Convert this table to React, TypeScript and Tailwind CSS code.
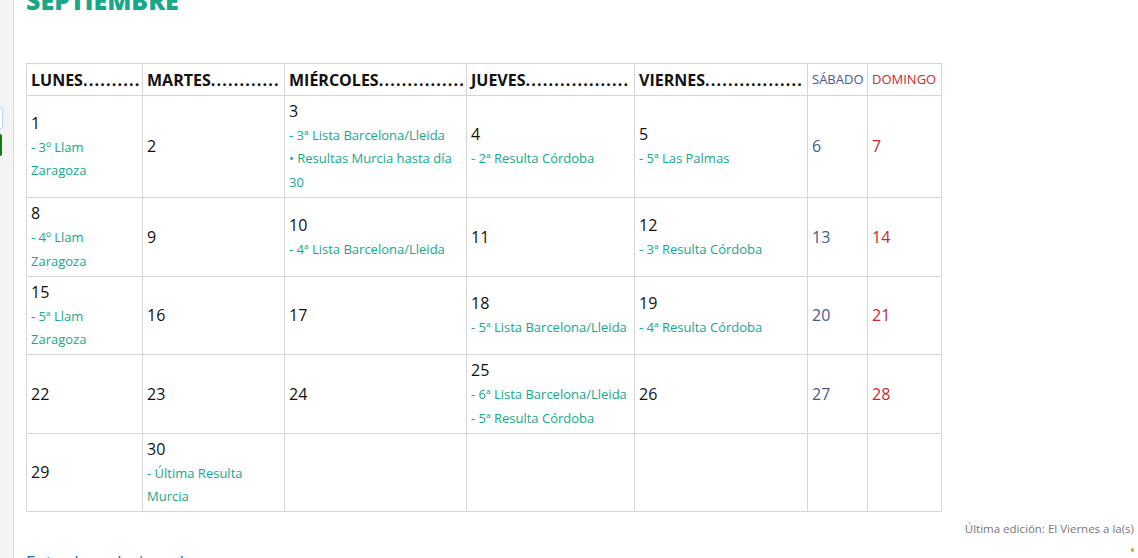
import React from "react";

type Day = { n?: number; ev?: React.ReactNode[] };

const teal = "text-[#17a78b]";

const weeks: Day[][] = [
  [
    { n: 1, ev: [<>- 3º Llam<br />Zaragoza</>] },
    { n: 2 },
    { n: 3, ev: ["- 3ª Lista Barcelona/Lleida", <>• Resultas Murcia hasta día<br />30</>] },
    { n: 4, ev: ["- 2ª Resulta Córdoba"] },
    { n: 5, ev: ["- 5ª Las Palmas"] },
    { n: 6 },
    { n: 7 },
  ],
  [
    { n: 8, ev: [<>- 4º Llam<br />Zaragoza</>] },
    { n: 9 },
    { n: 10, ev: ["- 4ª Lista Barcelona/Lleida"] },
    { n: 11 },
    { n: 12, ev: ["- 3ª Resulta Córdoba"] },
    { n: 13 },
    { n: 14 },
  ],
  [
    { n: 15, ev: [<>- 5ª Llam<br />Zaragoza</>] },
    { n: 16 },
    { n: 17 },
    { n: 18, ev: ["- 5ª Lista Barcelona/Lleida"] },
    { n: 19, ev: ["- 4ª Resulta Córdoba"] },
    { n: 20 },
    { n: 21 },
  ],
  [
    { n: 22 },
    { n: 23 },
    { n: 24 },
    { n: 25, ev: ["- 6ª Lista Barcelona/Lleida", "- 5ª Resulta Córdoba"] },
    { n: 26 },
    { n: 27 },
    { n: 28 },
  ],
  [{ n: 29 }, { n: 30, ev: [<>- Última Resulta<br />Murcia</>] }, {}, {}, {}, {}, {}],
];

const rowHeights = ["h-[102px]", "h-[79px]", "h-[78px]", "h-[79px]", "h-[78px]"];

// weekday headers, dots counted to fill each column like the original
const heads = [
  { label: "LUNES", dots: 10 },
  { label: "MARTES", dots: 12 },
  { label: "MIÉRCOLES", dots: 15 },
  { label: "JUEVES", dots: 18 },
  { label: "VIERNES", dots: 17 },
];

const Head = ({ label, dots }: { label: string; dots: number }) => (
  <th className="border border-[#d6d6d6] px-[4px] text-left align-middle">
    <div className="whitespace-nowrap text-[16px] font-bold text-[#111]">
      {label}
      <span className="tracking-[1.2px]">{".".repeat(dots)}</span>
    </div>
  </th>
);

const App = () => {
  return (
    <div className="relative flex h-[558px] w-[1138px] overflow-hidden bg-white font-['Open_Sans','Noto_Sans',sans-serif]">
      <aside className="w-[14px] shrink-0 overflow-hidden border-r border-[#dcdcdc] bg-[#f3f3f3] pt-[107px]">
        <div className="-ml-[20px] h-[22px] w-[23px] rounded-[2px] border border-[#b9d6f0] bg-white" />
        <div className="-ml-[20px] mt-[5px] h-[22px] w-[22px] rounded-[2px] bg-[#127a12]" />
      </aside>
      <main className="flex-1 pl-[12px]">
        <h1 className="-mt-[15px] text-[25px] font-extrabold leading-[30px] text-[#17a889]">SEPTIEMBRE</h1>
        <table className="mt-[48px] w-[915px] table-fixed border-collapse">
          <colgroup>
            <col className="w-[116px]" />
            <col className="w-[142px]" />
            <col className="w-[182px]" />
            <col className="w-[168px]" />
            <col className="w-[173px]" />
            <col className="w-[60px]" />
            <col className="w-[74px]" />
          </colgroup>
          <thead>
            <tr className="h-[32px]">
              {heads.map((h) => (
                <Head key={h.label} label={h.label} dots={h.dots} />
              ))}
              <th className="border border-[#d6d6d6] px-[4px] text-left text-[13px] font-normal text-[#4b5a86]">SÁBADO</th>
              <th className="border border-[#d6d6d6] px-[4px] text-left text-[13px] font-normal text-[#c42a2f]">DOMINGO</th>
            </tr>
          </thead>
          <tbody>
            {weeks.map((week, i) => (
              <tr key={i} className={rowHeights[i]}>
                {week.map((d, j) => (
                  <td key={j} className="border border-[#d6d6d6] px-[4px] align-middle">
                    {d.n && (
                      <div
                        className={`text-[16px] leading-[25px] ${
                          j === 5 ? "text-[#4b5a86]" : j === 6 ? "text-[#c42a2f]" : "text-[#111]"
                        }`}
                      >
                        {d.n}
                      </div>
                    )}
                    {d.ev?.map((e, k) => (
                      <div key={k} className={`text-[13px] leading-[23.5px] ${teal}`}>
                        {e}
                      </div>
                    ))}
                  </td>
                ))}
              </tr>
            ))}
          </tbody>
        </table>
        <p className="mt-[8px] pr-[4px] text-right text-[11.5px] text-[#777]">Última edición: El Viernes a la(s)</p>
        <p className="mt-[12px] text-[17px] text-[#1f6fb2]">Entradas relacionadas</p>
      </main>
      <span className="absolute right-[4px] bottom-[6px] h-[4px] w-[3px] rounded-sm bg-[#f0a020]" />
    </div>
  );
};

export default App;
